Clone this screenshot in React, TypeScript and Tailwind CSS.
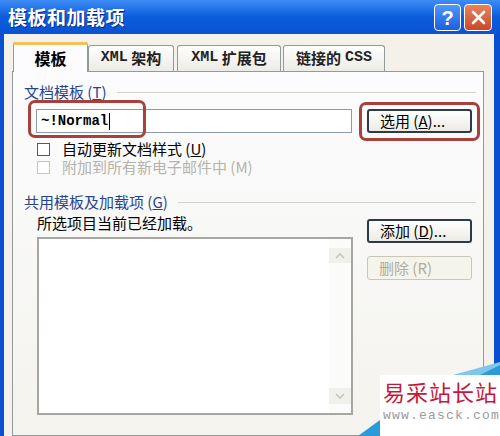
import React from "react"

const cjk = { fontFamily: '"Noto Sans CJK SC", "Noto Sans", sans-serif' }
const mono = { fontFamily: '"Liberation Mono", "Noto Sans CJK SC", monospace' }

function Tab({ children, active, w }: { children: React.ReactNode; active?: boolean; w: string }) {
  if (active) {
    return (
      <div className={"relative z-10 -mb-px flex h-[30px] items-center justify-center rounded-t-[3px] border border-b-0 border-[#919b9c] bg-[#fcfcfe] text-[16px] font-bold text-black " + w}>
        <div className="absolute -top-px -left-px -right-px h-[3px] rounded-t-[3px] bg-[#f3c05a]" />
        {children}
      </div>
    )
  }
  return (
    <div className={"flex h-[26px] items-center justify-center rounded-t-[3px] border border-b-0 border-[#919b9c] bg-gradient-to-b from-[#fefefe] to-[#ecebe6] text-[15px] font-bold text-[#222] " + w}>
      {children}
    </div>
  )
}

function Btn({ children, disabled }: { children: React.ReactNode; disabled?: boolean }) {
  return (
    <div
      className={
        disabled
          ? "flex h-[24px] w-[105px] items-center pl-[11px] rounded-[3px] border border-[#c9c7ba] bg-[#f5f4ea] text-[15px] leading-[18px] text-[#b0ada0]"
          : "flex h-[24px] w-[105px] items-center pl-[11px] rounded-[3px] border-2 border-[#2d3a4a] bg-gradient-to-b from-[#ffffff] to-[#ecebe3] text-[15px] leading-[18px] text-black"
      }
    >
      {children}
    </div>
  )
}

function GroupLabel({ children }: { children: React.ReactNode }) {
  return (
    <div className="flex h-[18px] items-center gap-[10px] pr-[4px]">
      <span className="text-[15px] leading-[18px] text-[#27458f] whitespace-nowrap">{children}</span>
      <div className="h-px flex-1 bg-[#d6d3c8]" />
    </div>
  )
}

export default function App() {
  return (
    <div className="relative flex h-[436px] w-[500px] flex-col overflow-hidden bg-[#0a4fd0]" style={cjk}>
      {/* title bar */}
      <div className="flex h-[34px] shrink-0 items-center justify-between bg-gradient-to-b from-[#3d8cf6] via-[#0b5cdc] to-[#0a52d2] pl-[8px] pr-[8px]">
        <span className="text-[19px] font-bold tracking-[0.5px] text-white [text-shadow:1px_1px_0_#0a2a80]">
          模板和加载项
        </span>
        <div className="flex gap-[3px] pt-[1px]">
          <div className="flex h-[27px] w-[27px] items-center justify-center rounded-[4px] border border-white bg-gradient-to-b from-[#4f97f8] to-[#1c5fdc] text-[20px] font-bold text-white" style={{ fontFamily: '"Liberation Sans", sans-serif' }}>
            ?
          </div>
          <div className="flex h-[27px] w-[28px] items-center justify-center rounded-[4px] border border-white bg-gradient-to-b from-[#e9835a] to-[#c8482a]">
            <svg width="15" height="15" viewBox="0 0 15 15">
              <path d="M2 2 L13 13 M13 2 L2 13" stroke="white" strokeWidth="2.6" strokeLinecap="round" />
            </svg>
          </div>
        </div>
      </div>

      {/* body */}
      <div className="flex flex-1 flex-col border-l-4 border-r-[6px] border-[#0a4fd0] bg-[#f3f1ea] pl-[8px] pr-[10px] pt-[8px]">
        <div className="flex items-end pl-[1px]">
          <Tab active w="w-[75px]">模板</Tab>
          <Tab w="w-[86px]"><span style={mono}>XML</span>&nbsp;架构</Tab>
          <div className="w-[3px]" />
          <Tab w="w-[104px]"><span style={mono}>XML</span>&nbsp;扩展包</Tab>
          <div className="w-[2px]" />
          <Tab w="w-[102px]">链接的 <span style={mono} className="ml-[4px]">CSS</span></Tab>
        </div>

        <div className="flex-1 border border-[#919b9c] bg-gradient-to-b from-[#fcfcfe] to-[#f4f3ee] pl-[11px] pr-[3px]">
          <div className="mt-[11px]">
            <GroupLabel>文档模板 (<u>T</u>)</GroupLabel>
          </div>

          <div className="mt-[8px] flex items-center pl-[12px]">
            <div className="flex h-[24px] w-[316px] items-center border border-[#8f9aa8] bg-white pl-[4px]">
              <span className="text-[14px] font-bold text-black" style={mono}>~!Normal</span>
              <div className="ml-[1px] h-[17px] w-px bg-black" />
            </div>
            <div className="ml-[15px]">
              <Btn>选用 (<u>A</u>)...</Btn>
            </div>
          </div>

          <div className="mt-[8px] flex h-[16px] items-center pl-[13px]">
            <div className="h-[13px] w-[13px] border border-[#5a5a5a] bg-white" />
            <span className="ml-[12px] text-[15px] leading-[16px] text-black">自动更新文档样式 (<u>U</u>)</span>
          </div>
          <div className="mt-[2px] flex h-[16px] items-center pl-[13px]">
            <div className="h-[13px] w-[13px] border border-[#c6c6c0] bg-white" />
            <span className="ml-[12px] text-[15px] leading-[16px] text-[#b5b3aa]">附加到所有新电子邮件中 (M)</span>
          </div>

          <div className="mt-[18px]">
            <GroupLabel>共用模板及加载项 (<u>G</u>)</GroupLabel>
          </div>

          <div className="mt-[3px] flex pl-[13px]">
            <div className="flex flex-col">
              <div className="flex h-[18px] items-center text-[15px] leading-[18px] text-black">所选项目当前已经加载。</div>
              <div className="mt-[5px] flex h-[178px] w-[316px] border-2 border-[#a7a6a0] bg-white">
                <div className="flex-1" />
                <div className="flex w-[22px] flex-col justify-between bg-[#fbfbf9] py-[9px]">
                  <div className="flex h-[15px] items-center justify-center bg-[#f1f1ec]">
                    <svg width="10" height="6" viewBox="0 0 10 6"><path d="M1 5 L5 1 L9 5" stroke="#c5c4bd" strokeWidth="1.6" fill="none" /></svg>
                  </div>
                  <div className="flex h-[16px] items-center justify-center bg-[#f1f1ec]">
                    <svg width="10" height="6" viewBox="0 0 10 6"><path d="M1 1 L5 5 L9 1" stroke="#c5c4bd" strokeWidth="1.6" fill="none" /></svg>
                  </div>
                </div>
              </div>
            </div>
            <div className="ml-[14px] mt-[5px] flex flex-col gap-[13px]">
              <Btn>添加 (<u>D</u>)...</Btn>
              <Btn disabled>删除 (R)</Btn>
            </div>
          </div>
        </div>
      </div>

      {/* red highlight marks */}
      <div className="absolute left-[28px] top-[100px] h-[38px] w-[118px] rounded-[7px] border-[3px] border-[#a8413c]" />
      <div className="absolute left-[359px] top-[102px] h-[39px] w-[121px] rounded-[7px] border-[3px] border-[#a8413c]" />

      {/* watermark */}
      <div className="absolute bottom-0 right-0 h-[74px] w-[142px]">
        <svg className="absolute inset-0" width="142" height="74" viewBox="0 0 142 74">
          <polygon points="95,13 142,0 142,13" fill="#7fc6ea" />
          <polygon points="122,13 142,3 142,13" fill="#2a9ad8" />
          <polygon points="0,74 22,58 22,74" fill="#2a9ad8" />
        </svg>
        <div className="absolute bottom-0 left-[22px] right-0 top-[13px] bg-white pl-[3px]">
          <div className="mt-[3px] text-[22px] leading-[26px] tracking-[1px] text-[#c8173a]">易采站长站</div>
          <div className="mt-[5px] text-[13px] leading-[14px] tracking-[1.2px] text-[#9a9a9a]" style={mono}>www.easck.com</div>
        </div>
      </div>
    </div>
  )
}
